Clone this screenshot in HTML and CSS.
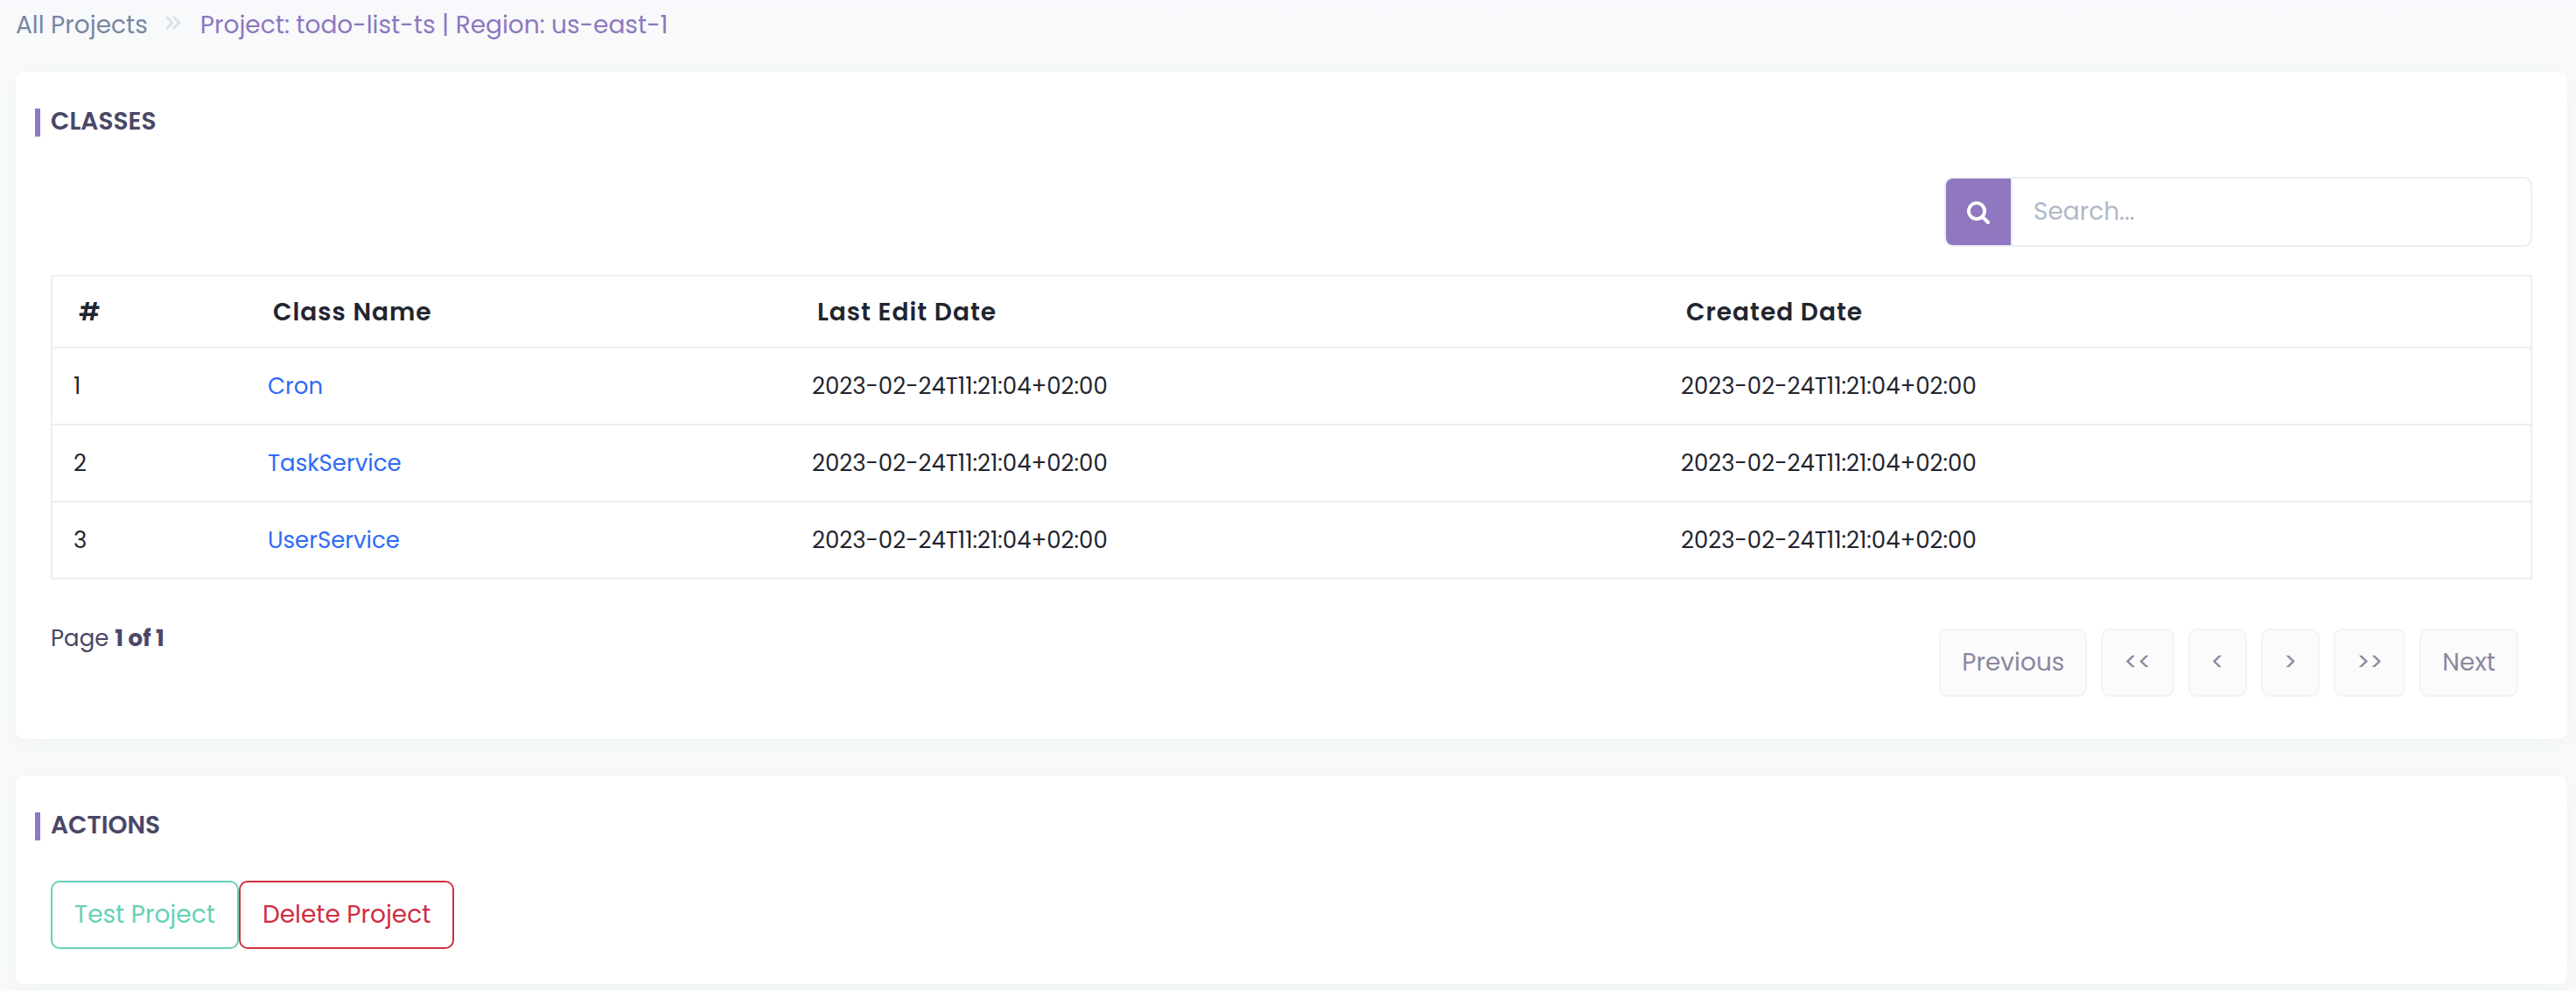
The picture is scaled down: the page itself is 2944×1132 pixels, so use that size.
FILE: index.html
```html
<!DOCTYPE html>
<html lang="en">
<head>
<meta charset="utf-8">
<title>Project: todo-list-ts</title>
<link rel="stylesheet" href="styles.css">
</head>
<body>
<nav class="breadcrumb">
  <a class="crumb" href="#">All Projects</a>
  <svg class="crumb-sep" viewBox="0 0 20 18" aria-hidden="true"><path d="M3 3l6 6-6 6M11 3l6 6-6 6"/></svg>
  <span class="crumb crumb-active">Project: todo-list-ts | Region: us-east-1</span>
</nav>
<main class="content">
  <section class="card">
    <h2 class="card-title">CLASSES</h2>
    <div class="search">
      <button class="search-btn" aria-label="Search">
        <svg class="search-icon" viewBox="0 0 26 26" aria-hidden="true"><circle cx="11" cy="11" r="9.1"/><path d="M18 18l6 6"/></svg>
      </button>
      <input class="search-input" type="text" placeholder="Search...">
    </div>
    <table class="table">
      <colgroup><col class="col-num"><col class="col-name"><col class="col-edit"><col></colgroup>
      <thead>
        <tr><th>#</th><th>Class Name</th><th>Last Edit Date</th><th>Created Date</th></tr>
      </thead>
      <tbody>
        <tr><td>1</td><td><a class="link" href="#">Cron</a></td><td>2023-02-24T11:21:04+02:00</td><td>2023-02-24T11:21:04+02:00</td></tr>
        <tr><td>2</td><td><a class="link" href="#">TaskService</a></td><td>2023-02-24T11:21:04+02:00</td><td>2023-02-24T11:21:04+02:00</td></tr>
        <tr><td>3</td><td><a class="link" href="#">UserService</a></td><td>2023-02-24T11:21:04+02:00</td><td>2023-02-24T11:21:04+02:00</td></tr>
      </tbody>
    </table>
    <div class="table-footer">
      <span class="page-info">Page <strong>1 of 1</strong></span>
      <div class="pager">
        <button class="btn btn-page">Previous</button>
        <button class="btn btn-page">&lt;&lt;</button>
        <button class="btn btn-page">&lt;</button>
        <button class="btn btn-page">&gt;</button>
        <button class="btn btn-page">&gt;&gt;</button>
        <button class="btn btn-page">Next</button>
      </div>
    </div>
  </section>
  <section class="card card-actions">
    <h2 class="card-title">ACTIONS</h2>
    <div class="actions">
      <button class="btn btn-test">Test Project</button>
      <button class="btn btn-delete">Delete Project</button>
    </div>
  </section>
</main>
</body>
</html>
```
FILE: styles.css
```css
* { box-sizing: border-box; }

html { overflow: hidden; }

body {
  margin: 0;
  min-height: 1132px;
  background: #f9fbfa linear-gradient(#f7f8fb, #f9fbfa) no-repeat 0 0 / 100% 60px;
  color: #4a4766;
  font: 400 28px/42px Poppins, Inter, sans-serif;
}

.breadcrumb {
  display: flex;
  align-items: center;
  height: 82px;
  padding: 8px 18px 32px;
}

.crumb { color: #7987a1; text-decoration: none; white-space: nowrap; }
.crumb-active { color: #8f78bf; }

.crumb-sep {
  width: 20px;
  height: 18px;
  margin: 0 21px 6px 19px;
  fill: none;
  stroke: #dbe1eb;
  stroke-width: 3;
  stroke-linecap: round;
  stroke-linejoin: round;
}

.content {
  display: flex;
  flex-direction: column;
  gap: 42px;
  padding: 0 10px 0 18px;
}

.card {
  height: 762px;
  padding: 42px 40px 0;
  border-radius: 10px;
  background: #fff;
  box-shadow: 0 4px 24px rgba(168, 180, 208, .14);
}

.card-actions { height: 238px; }

.card-title {
  height: 32px;
  margin: 0 0 0 -18px;
  padding-left: 12px;
  border-left: 6px solid #8f78bf;
  font-size: 28px;
  font-weight: 600;
  line-height: 30px;
}

.search {
  display: flex;
  width: 672px;
  height: 80px;
  margin: 46px 0 32px auto;
  overflow: hidden;
  border: 2px solid #ededf5;
  border-radius: 10px;
}

.search-btn {
  display: flex;
  align-items: center;
  justify-content: center;
  width: 74px;
  padding: 2px 0 0;
  border: 0;
  background: #8f78bf;
}

.search-icon {
  width: 26px;
  height: 26px;
  fill: none;
  stroke: #fff;
  stroke-width: 3.9;
  stroke-linecap: round;
}

.search-input {
  flex: 1;
  min-width: 0;
  padding: 0 24px;
  border: 0;
  border-left: 2px solid #ededf5;
  background: #fff;
  font: inherit;
}

.search-input::placeholder { color: #b0b8c8; opacity: 1; }

.table {
  width: 100%;
  table-layout: fixed;
  border: 2px solid #ededf5;
  border-bottom: 0;
  border-collapse: separate;
  border-spacing: 0;
  color: #22252f;
  font-size: 26px;
  text-align: left;
}

.col-num { width: 222px; }
.col-name { width: 622px; }
.col-edit { width: 993px; }

.table th {
  height: 82px;
  padding: 2px 30px 0;
  border-bottom: 2px solid #ededf5;
  font-size: 28px;
  font-weight: 600;
  letter-spacing: 1px;
}

.table td {
  height: 88px;
  padding: 0 24px;
  border-bottom: 2px solid #ededf5;
}

.link { color: #2f6bf6; text-decoration: none; }

.table-footer {
  display: flex;
  justify-content: space-between;
  align-items: flex-start;
  padding: 48px 16px 0 0;
}

.page-info { font-size: 26px; line-height: 39px; }
.page-info strong { font-weight: 700; }

.pager { display: flex; gap: 16px; margin-top: 8px; }

.btn {
  height: 78px;
  padding: 0 24px;
  border: 2px solid;
  border-radius: 10px;
  background: #fff;
  font: inherit;
  white-space: nowrap;
}

.btn-page { border-color: #f3f2f8; background: #fbfbfc; color: #8b88a0; }

.btn-test,
.btn-delete { padding: 0 25px; }

.btn-test { border-color: #66d1b8; color: #66d1b8; }
.btn-delete { border-color: #d12e43; color: #d12e43; }

.actions { display: flex; margin-top: 46px; }
```
